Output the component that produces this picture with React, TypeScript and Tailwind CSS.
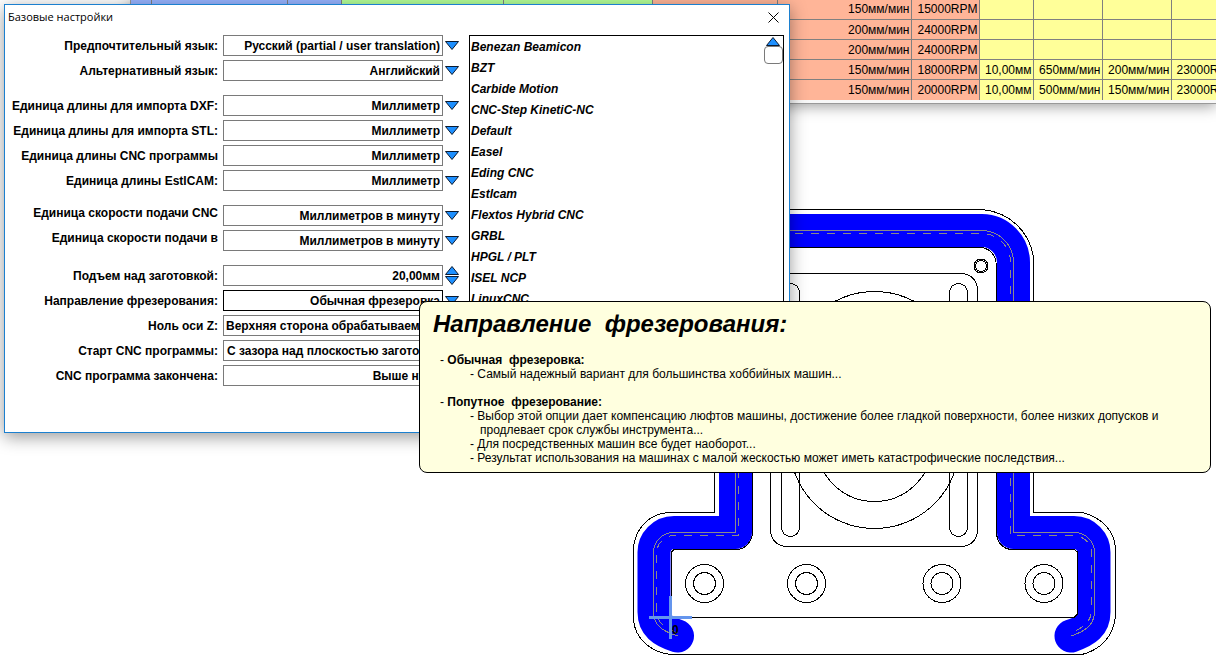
import { useState } from "react";

type Option = { id: string; label: string; value: string; align?: "left"; raised?: boolean; focused?: boolean; gap?: boolean };

// Settings shown on the left side of the dialog
const settingsTop: Option[] = [
  { id: "lang", label: "Предпочтительный язык:", value: "Русский (partial / user translation)" },
  { id: "alt-lang", label: "Альтернативный язык:", value: "Английский" },
  { id: "dxf", label: "Единица длины для импорта DXF:", value: "Миллиметр", gap: true },
  { id: "stl", label: "Единица длины для импорта STL:", value: "Миллиметр" },
  { id: "cnc-unit", label: "Единица длины CNC программы", value: "Миллиметр" },
  { id: "estlcam-unit", label: "Единица длины EstlCAM:", value: "Миллиметр" },
  { id: "feed-cnc", label: "Единица скорости подачи CNC", value: "Миллиметров в минуту", raised: true, gap: true },
  { id: "feed-in", label: "Единица скорости подачи в", value: "Миллиметров в минуту", raised: true },
];

const settingsBottom: Option[] = [
  { id: "direction", label: "Направление фрезерования:", value: "Обычная фрезеровка", focused: true },
  { id: "zero", label: "Ноль оси Z:", value: "Верхняя сторона обрабатываемой детали", align: "left" },
  { id: "start", label: "Старт CNC программы:", value: "С зазора над плоскостью заготовки" },
  { id: "end", label: "CNC программа закончена:", value: "Выше нуля" },
];

const controllers = [
  "Benezan Beamicon", "BZT", "Carbide Motion", "CNC-Step KinetiC-NC", "Default", "Easel", "Eding CNC",
  "Estlcam", "Flextos Hybrid CNC", "GRBL", "HPGL / PLT", "ISEL NCP", "LinuxCNC",
];

const columns = [
  { width: 20, color: "bg-[#98b4ff]" },
  { width: 136, color: "bg-[#98b4ff]" },
  { width: 54, color: "bg-[#98b4ff]" },
  { width: 162, color: "bg-[#b4ff98]" },
  { width: 149, color: "bg-[#b4ff98]" },
  { width: 125, color: "bg-[#ffb598]" },
  { width: 134, color: "bg-[#ffb598]" },
  { width: 68, color: "bg-[#ffb598]" },
  { width: 54, color: "bg-[#ffff99]" },
  { width: 69, color: "bg-[#ffff99]" },
  { width: 69, color: "bg-[#ffff99]" },
  { width: 67, color: "bg-[#ffff99]" },
];

const toolRows = [
  ["", "", "", "", "", "", "150мм/мин", "15000RPM", "", "", "", ""],
  ["", "", "", "", "", "", "200мм/мин", "24000RPM", "", "", "", ""],
  ["", "", "", "", "", "", "200мм/мин", "24000RPM", "", "", "", ""],
  ["", "", "", "", "", "", "150мм/мин", "18000RPM", "10,00мм", "650мм/мин", "200мм/мин", "23000RPM"],
  ["", "", "", "", "", "", "150мм/мин", "20000RPM", "10,00мм", "500мм/мин", "150мм/мин", "23000RPM"],
];

function DownArrow() {
  return (
    <svg className="pointer-events-none block shrink-0" width="16" height="10" viewBox="0 0 16 10" aria-hidden="true">
      <path d="M1.5 0.5H14.5L8 8.5Z" fill="#1e90ff" stroke="#0a1a30" />
    </svg>
  );
}

function UpArrow() {
  return (
    <svg className="block shrink-0" width="16" height="10" viewBox="0 0 16 10" aria-hidden="true">
      <path d="M1.5 9.5H14.5L8 1.5Z" fill="#1e90ff" stroke="#0a1a30" />
    </svg>
  );
}

function SettingRow({ option }: { option: Option }) {
  return (
    <div className={`flex h-[21px] items-center ${option.gap ? "mt-[14px]" : "mt-1"}`}>
      <label htmlFor={option.id} className={`w-[213px] shrink-0 whitespace-nowrap text-right ${option.raised ? "pb-1.5" : ""}`}>
        {option.label}
      </label>
      <select
        id={option.id}
        defaultValue={option.value}
        className={`ml-[5px] mr-px h-full w-[220px] appearance-none border bg-white px-0.5 outline-none ${
          option.focused ? "border-black" : "border-[#7a7a7a]"
        } ${option.align === "left" ? "text-left" : "text-right"}`}
      >
        <option>{option.value}</option>
      </select>
      <DownArrow />
    </div>
  );
}

function ToolTable() {
  return (
    <section className="absolute left-[130px] right-0 top-0 overflow-hidden border-b border-l border-[#999] bg-[#f8f8f8] pb-[3px] shadow-[0_2px_14px_rgba(0,0,0,0.4)]">
      <table className="-mt-px w-[1107px] table-fixed border-collapse text-right">
        <colgroup>
          {columns.map((column, i) => (
            <col key={i} style={{ width: column.width }} />
          ))}
        </colgroup>
        <tbody>
          {toolRows.map((row, r) => (
            <tr key={r} className={r < 4 ? "h-5" : "h-[21px]"}>
              {row.map((cell, c) => (
                <td
                  key={c}
                  className={`border-r border-[#808080] p-0 pr-px pt-0.5 leading-[17px] ${r < 4 ? "border-b" : ""} ${columns[c].color}`}
                >
                  {cell}
                </td>
              ))}
            </tr>
          ))}
        </tbody>
      </table>
    </section>
  );
}

// Part outline with the tool path around it
function Drawing() {
  return (
    <svg className="absolute inset-0 h-full w-full" fill="none" aria-label="Контур детали">
      <g stroke="#000" shapeRendering="crispEdges">
        <path d="M765.5 209.5H982C1010 212 1030 232 1033.5 258V512.5H1082C1102 517 1115 532 1115.5 549V617C1113 637 1100 650 1082 654.5H670.5C650 652 635 638 633.5 620V547C636 527 650 514 668 512.5H714.5V258C718 232 738 212 765.5 209.5Z" />
      </g>
      <path
        d="M677.5 636C662 631 654 625 654 612V553A20 20 0 0 1 674 532.5H735.5V263A32 32 0 0 1 767 230.5H982A32 32 0 0 1 1013.5 263V532.5H1074A20 20 0 0 1 1094 553V612C1094 625 1086 631 1071 636"
        stroke="#00f"
        strokeWidth="33"
        strokeLinecap="round"
        strokeLinejoin="round"
      />
      <g stroke="#8a8a8a" shapeRendering="crispEdges">
        <path d="M677.5 636C662 631 653.5 625 653.5 612V553A20 20 0 0 1 674 532.5H735.5V263A32 32 0 0 1 767 230.5H982A32 32 0 0 1 1013.5 263V532.5H1074A20 20 0 0 1 1094.5 553V612C1094 625 1086 631 1071 636" />
        <path
          strokeDasharray="8 8"
          d="M677.5 633C664 628 656.5 622 656.5 610V553A18 18 0 0 1 674 535.5H738.5V263A29 29 0 0 1 767 233.5H982A29 29 0 0 1 1010.5 263V535.5H1074A18 18 0 0 1 1091.5 553V610C1091 622 1084 628 1069 633"
        />
      </g>
      <g stroke="#000" shapeRendering="crispEdges">
        <path d="M766 247.5H982Q995 250 996.5 265V534Q998 547 1010 549.5H1074L1077.5 552V614L1074 617.5H671.5V552L674 549.5H739Q750 547 752.5 534V265Q753 250 766 247.5Z" />
        <rect x="770.5" y="273.5" width="207" height="273" rx="16" />
        <rect x="781.5" y="283.5" width="18" height="253" rx="9" />
        <rect x="949.5" y="283.5" width="18" height="253" rx="9" />
        <rect x="789.5" y="291.5" width="170" height="237" rx="85" />
        <rect x="816.5" y="320.5" width="116" height="181" rx="58" />
        <circle cx="981" cy="266" r="7" />
        <circle cx="981" cy="266" r="5.5" />
        {[704.5, 806.5, 942, 1044].map((cx) => (
          <g key={cx}>
            <circle cx={cx} cy="583.5" r="19" />
            <circle cx={cx} cy="583.5" r="11" />
          </g>
        ))}
      </g>
      {/* Zero point marker */}
      <path d="M670.5 596V639M649 617.5H692" stroke="#6495ed" strokeWidth="3" shapeRendering="crispEdges" />
      <text x="672" y="634" fill="#000" className="text-[12px] font-bold">0</text>
    </svg>
  );
}

function SettingsDialog() {
  const [lift, setLift] = useState(20);

  return (
    <section className="absolute left-1 top-1 w-[786px] border border-[#1c80cf] bg-white shadow-[0_4px_16px_rgba(0,0,0,0.4)]">
      <header className="flex h-[30px] items-start justify-between pl-[3px] pr-2.5">
        <h1 className="pt-1 font-['Open_Sans','Noto_Sans',sans-serif] text-[11px] leading-4">Базовые настройки</h1>
        <button type="button" aria-label="Закрыть" className="pt-[7px]">
          <svg width="11" height="11" viewBox="0 0 11 11" stroke="#000" aria-hidden="true">
            <path d="M0.5 0.5L10.5 10.5M10.5 0.5L0.5 10.5" />
          </svg>
        </button>
      </header>

      <div className="flex gap-[9px] pb-[46px] pr-[5px] font-bold">
        <form className="-mt-1 shrink-0">
          {settingsTop.map((option) => (
            <SettingRow key={option.id} option={option} />
          ))}
          <div className="mt-[14px] flex h-[21px] items-center">
            <label htmlFor="lift" className="w-[213px] shrink-0 text-right">Подъем над заготовкой:</label>
            <input
              id="lift"
              type="text"
              readOnly
              value={`${lift},00мм`}
              className="ml-[5px] mr-px h-full w-[220px] border border-[#7a7a7a] px-0.5 text-right outline-none"
            />
            <div className="flex flex-col gap-px">
              <button type="button" aria-label="Больше" onClick={() => setLift(lift + 1)}><UpArrow /></button>
              <button type="button" aria-label="Меньше" onClick={() => setLift(lift - 1)}><DownArrow /></button>
            </div>
          </div>
          {settingsBottom.map((option) => (
            <SettingRow key={option.id} option={option} />
          ))}
        </form>

        <div className="flex flex-1 items-start justify-between border border-black">
          <ul className="pl-px pt-px italic leading-[21px]">
            {controllers.map((name) => (
              <li key={name}>{name}</li>
            ))}
          </ul>
          <div className="flex w-5 flex-col items-center">
            <button type="button" aria-label="Вверх"><UpArrow /></button>
            <div className="h-[18px] w-[19px] rounded border border-[#7a7a7a] bg-white" />
          </div>
        </div>
      </div>
    </section>
  );
}

function HelpTooltip() {
  return (
    <aside role="tooltip" className="absolute left-[419px] right-[5px] top-[301px] rounded-lg border border-black bg-[#ffffdf] pb-[7px] pl-[13px] leading-[14px]">
      <h2 className="whitespace-pre pb-[15px] pt-2 text-[24px] font-bold italic leading-7">{"Направление  фрезерования:"}</h2>
      <p className="whitespace-pre pl-[7px]">- <b>{"Обычная  фрезеровка:"}</b></p>
      <p className="pl-[37px]">- Самый надежный вариант для большинства хоббийных машин...</p>
      <p className="whitespace-pre pl-[7px] pt-[14px]">- <b>{"Попутное  фрезерование:"}</b></p>
      <p className="pl-[37px]">
        - Выбор этой опции дает компенсацию люфтов машины, достижение более гладкой поверхности, более низких допусков и
      </p>
      <p className="pl-[47px]">продлевает срок службы инструмента...</p>
      <p className="pl-[37px]">- Для посредственных машин все будет наоборот...</p>
      <p className="pl-[37px]">- Результат использования на машинах с малой жескостью может иметь катастрофические последствия...</p>
    </aside>
  );
}

export default function App() {
  return (
    <main className="relative min-h-screen overflow-hidden bg-white font-['Liberation_Sans',Arial,sans-serif] text-[12px] leading-4 text-black">
      <Drawing />
      <ToolTable />
      <SettingsDialog />
      <HelpTooltip />
    </main>
  );
}
